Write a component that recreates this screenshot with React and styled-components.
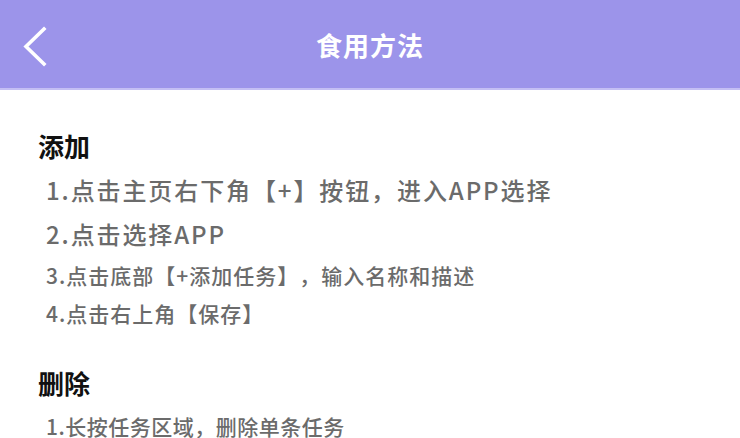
import styled, { createGlobalStyle } from "styled-components"

const GlobalStyle = createGlobalStyle`
    html, body {
        margin: 0;
        padding: 0;
        background: #ffffff;
        font-family: "Noto Sans CJK SC", "Noto Sans", sans-serif;
        text-spacing-trim: space-all;
    }
`

const sections = [
    {
        title: "添加",
        steps: [
            { text: "1.点击主页右下角【+】按钮，进入APP选择", size: "lg" },
            { text: "2.点击选择APP", size: "lg" },
            { text: "3.点击底部【+添加任务】，输入名称和描述", size: "md" },
            { text: "4.点击右上角【保存】", size: "md" },
        ],
    },
    {
        title: "删除",
        steps: [
            { text: "1.长按任务区域，删除单条任务", size: "sm" },
        ],
    },
]

const stepFont = {
    lg: { size: "24px", spacing: "1.9px", height: "44px" },
    md: { size: "21px", spacing: "1px", height: "38px" },
    sm: { size: "21px", spacing: "0.5px", height: "34px" },
}

const BackIcon = () => (
    <svg width="28" height="42" viewBox="0 0 28 42" fill="none">
        <path d="M23 3 L5 20.5 L23 38" stroke="#ffffff" strokeWidth="3.6" strokeLinecap="square" strokeLinejoin="miter" />
    </svg>
)

const App = () => {
    return (
        <Page>
            <GlobalStyle />
            <Header>
                <BackButton><BackIcon /></BackButton>
                <Title>食用方法</Title>
            </Header>
            <Content>
                {sections.map((section) => (
                    <Section key={section.title}>
                        <SectionTitle>{section.title}</SectionTitle>
                        {section.steps.map((step) => (
                            <Step key={step.text} size={step.size}>{step.text}</Step>
                        ))}
                    </Section>
                ))}
            </Content>
        </Page>
    )
}

const Page = styled.div`
    width: 740px;
    height: 438px;
    overflow: hidden;
    background: #ffffff;
`

const Header = styled.div`
    position: relative;
    height: 88px;
    background: #9c94ea;
    border-bottom: 2px solid #c4bff4;
    display: flex;
    align-items: center;
    justify-content: center;
`

const BackButton = styled.div`
    position: absolute;
    left: 21px;
    top: 26px;
    display: flex;
`

const Title = styled.div`
    color: #ffffff;
    font-size: 26px;
    font-weight: 700;
    letter-spacing: 1px;
`

const Content = styled.div`
    padding: 38px 0 0 38px;
    display: flex;
    flex-direction: column;
    gap: 33px;
`

const Section = styled.div`
    display: flex;
    flex-direction: column;
`

const SectionTitle = styled.div`
    color: #111111;
    font-size: 26px;
    font-weight: 700;
    line-height: 36px;
    margin-bottom: 4px;
`

const Step = styled.div`
    color: #6b6b6b;
    font-weight: 500;
    padding-left: 8px;
    font-size: ${(p) => stepFont[p.size].size};
    letter-spacing: ${(p) => stepFont[p.size].spacing};
    line-height: ${(p) => stepFont[p.size].height};
    margin-top: ${(p) => (p.size === "sm" ? "4px" : "0")};
`

export default App
